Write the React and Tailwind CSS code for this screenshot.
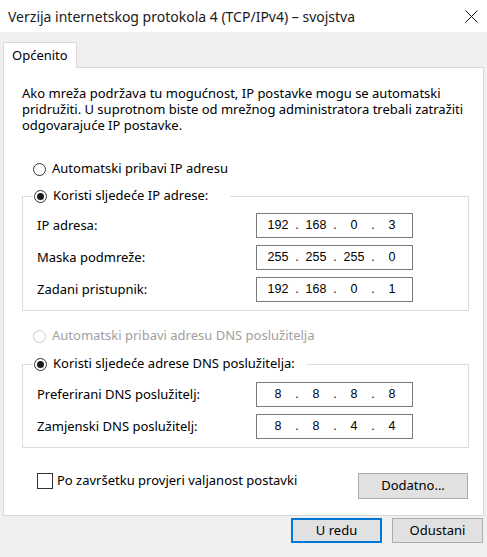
import React from 'react';

const font = { fontFamily: '"Noto Sans", "Open Sans", sans-serif' };

const Radio = ({ checked, disabled }) => (
  <span
    className={`inline-flex h-[13px] w-[13px] shrink-0 items-center justify-center rounded-full border bg-white ${
      disabled ? 'border-[#cccccc]' : 'border-[#333333]'
    }`}
  >
    {checked && <span className="h-[7px] w-[7px] rounded-full bg-[#1a1a1a]" />}
  </span>
);

const IpField = ({ parts }) => (
  <div className="flex h-[25px] w-[157px] items-center border border-[#7a7a7a] bg-white pl-[4px] font-['Liberation_Sans'] text-[12.5px] text-black">
    {parts.map((p, i) => (
      <React.Fragment key={i}>
        <span className="w-[34px] text-center">{p}</span>
        {i < 3 && <span className="w-[4px] text-center">.</span>}
      </React.Fragment>
    ))}
  </div>
);

const Row = ({ label, parts }) => (
  <div className="flex h-[25px] items-center">
    <span className="w-[233px] pl-[14px]">{label}</span>
    <IpField parts={parts} />
  </div>
);

export default function App() {
  return (
    <div className="flex h-[557px] w-[487px] flex-col bg-[#f0f0f0] text-[13px] text-black" style={font}>
      {/* title bar */}
      <div className="flex h-[32px] shrink-0 items-center justify-between bg-white pl-[8px] pr-[9px]">
        <span className="text-[14px] text-[#1a1a1a]">Verzija internetskog protokola 4 (TCP/IPv4) – svojstva</span>
        <svg width="13" height="13" viewBox="0 0 13 13">
          <path d="M0.5 0.5 L12.5 12.5 M12.5 0.5 L0.5 12.5" stroke="#111" strokeWidth="1" />
        </svg>
      </div>

      <div className="px-[3px] pt-[10px]">
        {/* tab */}
        <div className="relative z-10 -mb-px flex h-[26px] w-[74px] items-center border border-b-0 border-[#d9d9d9] bg-white pl-[8px]">
          Općenito
        </div>

        {/* panel */}
        <div className="flex h-[449px] w-[481px] flex-col border border-[#d9d9d9] bg-white pl-[18px] pr-[14px]">
          <p className="mt-[17px] leading-[16px]">
            Ako mreža podržava tu mogućnost, IP postavke mogu se automatski pridružiti. U suprotnom biste od mrežnog administratora trebali zatražiti odgovarajuće IP postavke.
          </p>

          <label className="mt-[28px] flex h-[16px] items-center gap-[6px] pl-[11px]">
            <Radio />
            <span>Automatski pribavi IP adresu</span>
          </label>

          <fieldset className="mt-[11px] border border-[#dcdcdc] px-0 pt-[9px] pb-[8px]">
            <legend className="ml-[10px] flex h-[16px] items-center gap-[6px] pl-[1px] pr-[22px]">
              <Radio checked />
              <span>Koristi sljedeće IP adrese:</span>
            </legend>
            <div className="flex flex-col gap-[7px]">
              <Row label="IP adresa:" parts={['192', '168', '0', '3']} />
              <Row label="Maska podmreže:" parts={['255', '255', '255', '0']} />
              <Row label="Zadani pristupnik:" parts={['192', '168', '0', '1']} />
            </div>
          </fieldset>

          <label className="mt-[17px] flex h-[16px] items-center gap-[6px] pl-[11px] text-[#a0a0a0]">
            <Radio disabled />
            <span>Automatski pribavi adresu DNS poslužitelja</span>
          </label>

          <fieldset className="mt-[12px] border border-[#dcdcdc] px-0 pt-[10px] pb-[8px]">
            <legend className="ml-[10px] flex h-[16px] items-center gap-[6px] pl-[1px] pr-[12px]">
              <Radio checked />
              <span>Koristi sljedeće adrese DNS poslužitelja:</span>
            </legend>
            <div className="flex flex-col gap-[7px]">
              <Row label="Preferirani DNS poslužitelj:" parts={['8', '8', '8', '8']} />
              <Row label="Zamjenski DNS poslužitelj:" parts={['8', '8', '4', '4']} />
            </div>
          </fieldset>

          <div className="mt-[25px] flex items-start justify-between pr-[1px]">
            <label className="-mt-[2px] flex items-center gap-[4px] pl-[15px]">
              <span className="h-[16px] w-[16px] border border-[#333333] bg-white" />
              <span>Po završetku provjeri valjanost postavki</span>
            </label>
            <button className="h-[26px] w-[110px] border border-[#adadad] bg-[#e1e1e1]">Dodatno...</button>
          </div>
        </div>

        {/* buttons */}
        <div className="mt-[2px] flex justify-end gap-[10px] pr-[1px]">
          <button className="h-[25px] w-[91px] border-2 border-[#0078d7] bg-[#e1e1e1]">U redu</button>
          <button className="h-[25px] w-[91px] border border-[#adadad] bg-[#e1e1e1]">Odustani</button>
        </div>
      </div>
    </div>
  );
}
